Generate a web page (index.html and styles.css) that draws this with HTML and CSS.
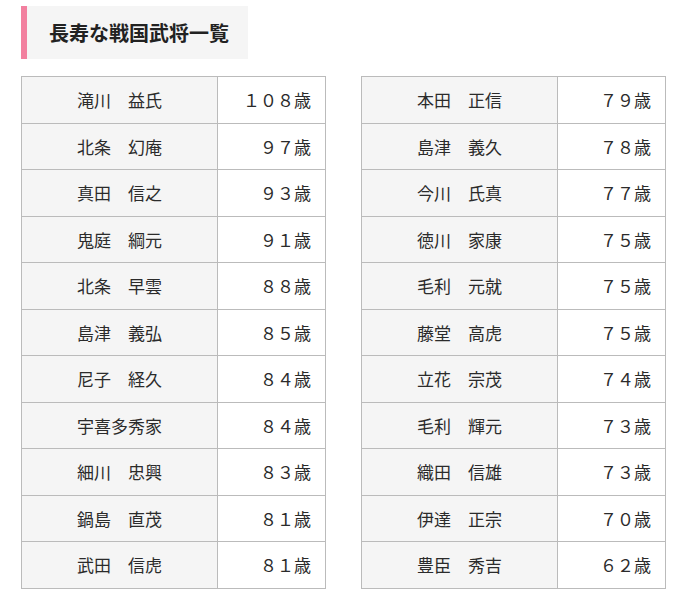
FILE: index.html
```html
<!DOCTYPE html>
<html lang="ja">
<head>
<meta charset="utf-8">
<title>長寿な戦国武将一覧</title>
<link rel="stylesheet" href="styles.css">
</head>
<body>
<div class="page">
  <h2 class="heading">長寿な戦国武将一覧</h2>
  <div class="tables">
    <table class="list">
      <tr><td class="name">滝川　益氏</td><td class="age">１０８歳</td></tr>
      <tr><td class="name">北条　幻庵</td><td class="age">９７歳</td></tr>
      <tr><td class="name">真田　信之</td><td class="age">９３歳</td></tr>
      <tr><td class="name">鬼庭　綱元</td><td class="age">９１歳</td></tr>
      <tr><td class="name">北条　早雲</td><td class="age">８８歳</td></tr>
      <tr><td class="name">島津　義弘</td><td class="age">８５歳</td></tr>
      <tr><td class="name">尼子　経久</td><td class="age">８４歳</td></tr>
      <tr><td class="name">宇喜多秀家</td><td class="age">８４歳</td></tr>
      <tr><td class="name">細川　忠興</td><td class="age">８３歳</td></tr>
      <tr><td class="name">鍋島　直茂</td><td class="age">８１歳</td></tr>
      <tr><td class="name">武田　信虎</td><td class="age">８１歳</td></tr>
    </table>
    <table class="list">
      <tr><td class="name">本田　正信</td><td class="age">７９歳</td></tr>
      <tr><td class="name">島津　義久</td><td class="age">７８歳</td></tr>
      <tr><td class="name">今川　氏真</td><td class="age">７７歳</td></tr>
      <tr><td class="name">徳川　家康</td><td class="age">７５歳</td></tr>
      <tr><td class="name">毛利　元就</td><td class="age">７５歳</td></tr>
      <tr><td class="name">藤堂　高虎</td><td class="age">７５歳</td></tr>
      <tr><td class="name">立花　宗茂</td><td class="age">７４歳</td></tr>
      <tr><td class="name">毛利　輝元</td><td class="age">７３歳</td></tr>
      <tr><td class="name">織田　信雄</td><td class="age">７３歳</td></tr>
      <tr><td class="name">伊達　正宗</td><td class="age">７０歳</td></tr>
      <tr><td class="name">豊臣　秀吉</td><td class="age">６２歳</td></tr>
    </table>
  </div>
</div>
</body>
</html>
```
FILE: styles.css
```css
html, body {
  margin: 0;
  padding: 0;
  background: #ffffff;
}
body {
  font-family: "Noto Sans CJK JP", "Noto Sans", sans-serif;
  color: #2b2b2b;
}
.page {
  padding: 6px 0 0 21px;
}
.heading {
  box-sizing: border-box;
  width: 227px;
  height: 53px;
  margin: 0;
  padding-left: 22px;
  border-left: 6px solid #f2809f;
  background: #f5f5f5;
  font-size: 20px;
  font-weight: bold;
  line-height: 53px;
  color: #222222;
}
.tables {
  display: flex;
  gap: 35px;
  margin-top: 17px;
  align-items: flex-start;
}
.list {
  border-collapse: collapse;
  width: 305px;
  table-layout: fixed;
}
.list tr {
  height: 46.5px;
}
.list td {
  border: 1px solid #bbbbbb;
  font-size: 17px;
  padding: 0;
  line-height: 1;
  vertical-align: middle;
}
.name {
  width: 195px;
  background: #f5f5f5;
  text-align: center;
}
.age {
  background: #ffffff;
  text-align: right;
  padding-right: 14px !important;
}
```
